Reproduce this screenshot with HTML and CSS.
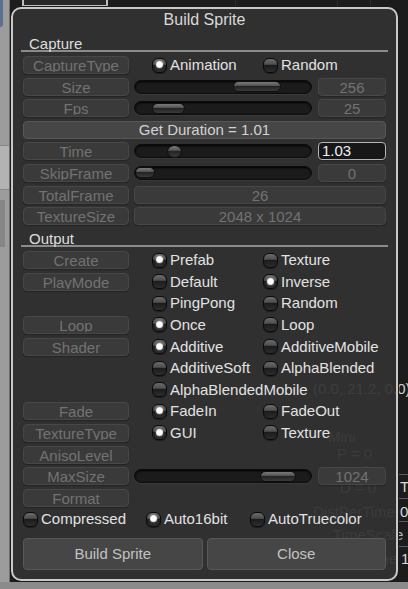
FILE: index.html
```html
<!DOCTYPE html>
<html>
<head>
<meta charset="utf-8">
<link rel="stylesheet" href="styles.css">
</head>
<body>
<div class="scene">
  <div class="left-strip">
    <div class="ls-blue"></div>
    <div class="ls-light"></div>
    <div class="ls-dark"></div>
  </div>
  <div class="top-tab"></div>
  <div class="vline v1"></div>
  <div class="vline v2"></div>
  <div class="vline v3"></div>
  <div class="bg-text t-vec">(0.0, 21.2, 0.0)</div>
  <div class="bg-text t-mini">Mini</div>
  <div class="bg-text t-p">P = 0</div>
  <div class="bg-text t-i">I = 0</div>
  <div class="bg-text t-d">D = 0</div>
  <div class="bg-text t-dist">DistPerTime</div>
  <div class="bg-text t-scale">TimeScale</div>
  <div class="bg-text t-elapsed">ElapsedTime</div>
  <div class="bg-text bright t-v1">Tr</div>
  <div class="bg-text bright t-v2">0.</div>
  <div class="bg-text bright t-v3">1</div>
  <div class="hline h1"></div>
  <div class="hline h2"></div>
  <div class="hline h3"></div>
  <div class="hline h4"></div>
  <div class="bottom-bar"></div>
</div>

<div class="window">
  <div class="title">Build Sprite</div>

  <div class="section-head">Capture</div>
  <div class="rows">
    <div class="row">
      <div class="lbl"><span>CaptureType</span></div>
      <div class="radios">
        <div class="opt on"><span class="rb"></span>Animation</div>
        <div class="opt"><span class="rb"></span>Random</div>
      </div>
    </div>
    <div class="row">
      <div class="lbl"><span>Size</span></div>
      <div class="slider"><span class="thumb" style="margin-left:98px;width:48px"></span></div>
      <div class="val"><span>256</span></div>
    </div>
    <div class="row">
      <div class="lbl"><span>Fps</span></div>
      <div class="slider"><span class="thumb" style="margin-left:17px;width:33px"></span></div>
      <div class="val"><span>25</span></div>
    </div>
    <div class="row">
      <div class="wide-btn">Get Duration = 1.01</div>
    </div>
    <div class="row">
      <div class="lbl"><span>Time</span></div>
      <div class="slider"><span class="thumb round" style="margin-left:32px;width:15px"></span></div>
      <div class="val edit">1.03</div>
    </div>
    <div class="row">
      <div class="lbl"><span>SkipFrame</span></div>
      <div class="slider"><span class="thumb" style="margin-left:0px;width:20px"></span></div>
      <div class="val"><span>0</span></div>
    </div>
    <div class="row">
      <div class="lbl"><span>TotalFrame</span></div>
      <div class="val long"><span>26</span></div>
    </div>
    <div class="row">
      <div class="lbl"><span>TextureSize</span></div>
      <div class="val long"><span>2048 x 1024</span></div>
    </div>
  </div>

  <div class="section-head">Output</div>
  <div class="rows">
    <div class="row">
      <div class="lbl"><span>Create</span></div>
      <div class="radios">
        <div class="opt on"><span class="rb"></span>Prefab</div>
        <div class="opt"><span class="rb"></span>Texture</div>
      </div>
    </div>
    <div class="row">
      <div class="lbl"><span>PlayMode</span></div>
      <div class="radios">
        <div class="opt"><span class="rb"></span>Default</div>
        <div class="opt on"><span class="rb"></span>Inverse</div>
      </div>
    </div>
    <div class="row">
      <div class="spacer"></div>
      <div class="radios">
        <div class="opt"><span class="rb"></span>PingPong</div>
        <div class="opt"><span class="rb"></span>Random</div>
      </div>
    </div>
    <div class="row">
      <div class="lbl"><span>Loop</span></div>
      <div class="radios">
        <div class="opt on"><span class="rb"></span>Once</div>
        <div class="opt"><span class="rb"></span>Loop</div>
      </div>
    </div>
    <div class="row">
      <div class="lbl"><span>Shader</span></div>
      <div class="radios">
        <div class="opt on"><span class="rb"></span>Additive</div>
        <div class="opt"><span class="rb"></span>AdditiveMobile</div>
      </div>
    </div>
    <div class="row">
      <div class="spacer"></div>
      <div class="radios">
        <div class="opt"><span class="rb"></span>AdditiveSoft</div>
        <div class="opt"><span class="rb"></span>AlphaBlended</div>
      </div>
    </div>
    <div class="row">
      <div class="spacer"></div>
      <div class="radios">
        <div class="opt free"><span class="rb"></span>AlphaBlendedMobile</div>
      </div>
    </div>
    <div class="row">
      <div class="lbl"><span>Fade</span></div>
      <div class="radios">
        <div class="opt on"><span class="rb"></span>FadeIn</div>
        <div class="opt"><span class="rb"></span>FadeOut</div>
      </div>
    </div>
    <div class="row">
      <div class="lbl"><span>TextureType</span></div>
      <div class="radios">
        <div class="opt on"><span class="rb"></span>GUI</div>
        <div class="opt"><span class="rb"></span>Texture</div>
      </div>
    </div>
    <div class="row">
      <div class="lbl"><span>AnisoLevel</span></div>
    </div>
    <div class="row">
      <div class="lbl"><span>MaxSize</span></div>
      <div class="slider"><span class="thumb" style="margin-left:125px;width:36px"></span></div>
      <div class="val"><span>1024</span></div>
    </div>
    <div class="row">
      <div class="lbl"><span>Format</span></div>
    </div>
    <div class="row format-opts">
      <div class="opt w1"><span class="rb"></span>Compressed</div>
      <div class="opt on w2"><span class="rb"></span>Auto16bit</div>
      <div class="opt"><span class="rb"></span>AutoTruecolor</div>
    </div>
  </div>

  <div class="btns">
    <div class="btn">Build Sprite</div>
    <div class="btn">Close</div>
  </div>
</div>
</body>
</html>
```

FILE: styles.css
```css
* { box-sizing: border-box; }
html, body { margin: 0; padding: 0; }
body {
  width: 408px;
  height: 589px;
  overflow: hidden;
  position: relative;
  background: #1c1c1c;
  font-family: "Liberation Sans", Arial, sans-serif;
  font-size: 15px;
}

/* ---------- background editor (behind the window) ---------- */
.scene { position: absolute; inset: 0; }
.left-strip {
  position: absolute; left: 0; top: 0; width: 10px; height: 582px;
  background: #9c9c9c; border-right: 1px solid #6e6e6e;
}
.ls-blue { position: absolute; left: 0; top: 0; width: 3px; height: 27px; background: #5d6e8e; border-radius: 0 0 3px 0; }
.ls-light { position: absolute; left: 0; top: 145px; width: 9px; height: 45px; background: #b3b3b3; border-top: 1px solid #888; border-bottom: 1px solid #888; }
.ls-dark { position: absolute; left: 0; top: 200px; width: 5px; height: 47px; background: #858585; }
.top-tab {
  position: absolute; left: 22px; top: -6px; width: 86px; height: 13px;
  border: 2px solid #bdbdbd; background: #272727;
}
.vline { position: absolute; top: 0; width: 1px; height: 8px; background: #2c2c2c; }
.v1 { left: 235px; } .v2 { left: 337px; } .v3 { left: 370px; }
.hline { position: absolute; left: 396px; width: 12px; height: 1px; background: #5a5a5a; }
.h1 { top: 474px; } .h2 { top: 498px; } .h3 { top: 521px; } .h4 { top: 546px; }
.bottom-bar { position: absolute; left: 0; top: 582px; width: 408px; height: 7px; background: #8b8b8b; }
.bg-text { position: absolute; color: #b4b4b4; line-height: 17px; white-space: nowrap; }
.bright { color: #d8d8d8; }
.t-vec { left: 313px; top: 380px; color: #d0d0d0; }
.t-mini { left: 328px; top: 428px; }
.t-p { left: 337px; top: 445px; }
.t-i { left: 340px; top: 462px; }
.t-d { left: 340px; top: 479px; }
.t-dist { left: 313px; top: 503px; }
.t-scale { left: 333px; top: 526px; }
.t-elapsed { left: 310px; top: 550px; }
.t-v1 { left: 400px; top: 478px; }
.t-v2 { left: 400px; top: 503px; }
.t-v3 { left: 401px; top: 550px; }

/* ---------- window ---------- */
.window {
  position: absolute; left: 11px; top: 7px; width: 387px; height: 574px;
  border: 2px solid #c9c9c9; border-radius: 10px;
  background: rgba(50, 50, 50, 0.93);
  box-shadow: 0 0 0 1px #1a1a1a;
  padding: 0 10px 9px;
  display: flex; flex-direction: column;
}
.title {
  height: 21px; line-height: 21px; text-align: center;
  font-size: 16px; color: #d9d9d9;
}
.section-head {
  margin: 5px -2px 0; padding-left: 8px;
  height: 17px; line-height: 17px;
  border-bottom: 2px solid #8b8b8b;
  color: #dedede;
}
.rows { display: flex; flex-direction: column; gap: 3.6px; margin-top: 4px; }
.row { display: flex; align-items: center; height: 18px; }

.lbl, .val {
  height: 18px; flex: none;
  background: #3a3a3a; border: 1px solid #474747; border-radius: 4px;
  color: #727272; text-align: center; line-height: 17px;
  box-shadow: 0 1px 1px rgba(0,0,0,0.25);
}
.lbl span, .val span { display: block; height: 15px; overflow: hidden; }
.lbl { width: 106px; }
.spacer { width: 106px; flex: none; }
.val { width: 68px; margin-left: 6px; }
.val.long { width: 252px; margin-left: 5px; }
.val.edit {
  background: #171717; border-color: #b4b4b4; color: #f0f0f0;
  text-align: left; padding-left: 3px; line-height: 16px;
}

.slider {
  width: 178px; height: 14px; margin-left: 5px; flex: none;
  border-radius: 7px; background: #1b1b1b; border: 1px solid #0c0c0c;
  box-shadow: inset 0 1px 2px #000, 0 1px 0 rgba(255,255,255,0.05);
  display: flex; align-items: center;
}
.thumb {
  display: block; height: 11px; flex: none;
  border-radius: 6px; border: 1px solid #101010;
  background: linear-gradient(#7a7a7a 0%, #575757 38%, #242424 50%, #3a3a3a 100%);
}
.thumb.round { height: 13px; border-radius: 50%; }

.radios { display: flex; margin-left: 23px; }
.opt {
  display: flex; align-items: center; gap: 3px;
  width: 111px; height: 18px; line-height: 18px;
  color: #e2e2e2; white-space: nowrap;
}
.opt.free { width: auto; }
.rb {
  position: relative; flex: none;
  width: 15px; height: 15px; border-radius: 6px;
  border: 1px solid #0a0a0a;
  background: linear-gradient(#6a6a6a 0%, #505050 40%, #1c1c1c 50%, #2e2e2e 100%);
  box-shadow: 0 1px 1px rgba(0,0,0,0.4);
}
.on .rb::after {
  content: ""; position: absolute; left: 3px; top: 2.5px;
  width: 7px; height: 7px; border-radius: 50%;
  background: radial-gradient(circle, #ffffff 45%, #d8d8d8 75%, rgba(210,210,210,0.7) 100%);
  box-shadow: 0 0 2px rgba(255,255,255,0.7);
}

.wide-btn {
  width: 100%; height: 18px;
  background: #464646; border: 1px solid #575757; border-radius: 4px;
  color: #d2d2d2; text-align: center; line-height: 16px;
}

.format-opts .opt { width: auto; }
.format-opts .w1 { width: 123px; }
.format-opts .w2 { width: 104px; }

.btns { display: flex; gap: 4px; margin-top: 10px; }
.btn {
  flex: 1; height: 32px;
  background: rgba(72,72,72,0.95); border: 1px solid #585858; border-radius: 4px;
  color: #c2c2c2; text-align: center; line-height: 30px;
}
```
